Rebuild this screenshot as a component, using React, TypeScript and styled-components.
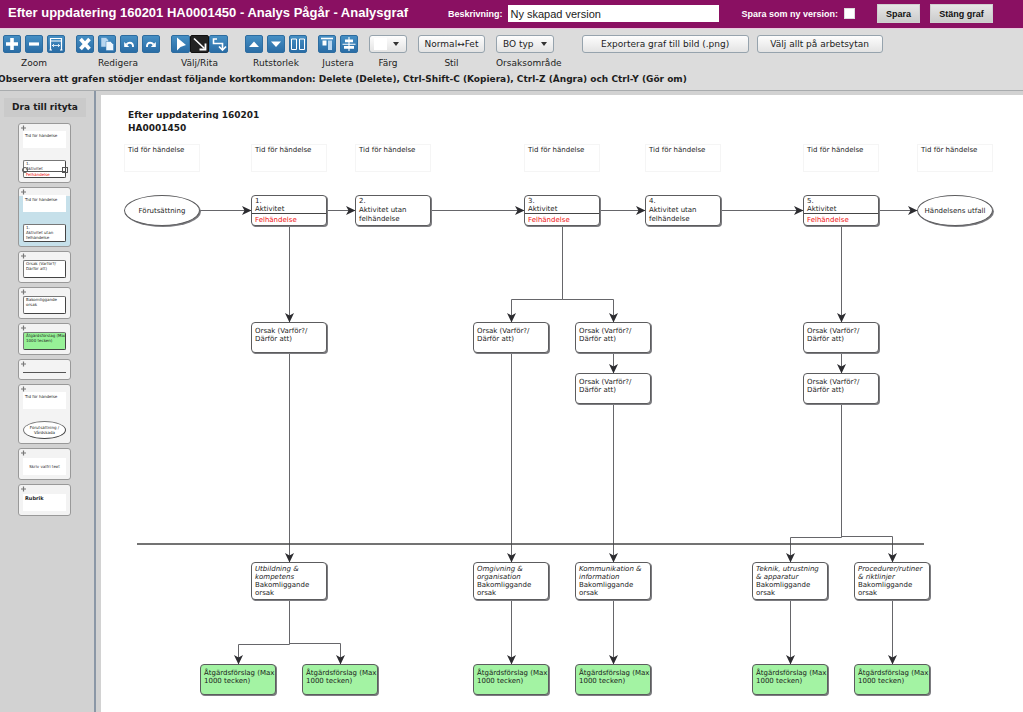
import React from "react";
import styled, { createGlobalStyle, css } from "styled-components";

const GlobalStyle = createGlobalStyle`
  * { box-sizing: border-box; }
  html, body { margin: 0; padding: 0; }
  body {
    font-family: "DejaVu Sans", Verdana, sans-serif;
    font-size: 9px;
    color: #1c1c1c;
    background: #d2d2d2;
  }
  button, input, select { font: inherit; color: inherit; margin: 0; }
`;

const Page = styled.div`
  min-height: 100vh;
  display: flex;
  flex-direction: column;
`;

/* ---------- header ---------- */

const Header = styled.header`
  height: 29px;
  padding: 0 30px 1px 8px;
  display: flex;
  align-items: center;
  background: #8a1062;
  border-bottom: 1px solid #e9c9de;
  color: #fff;
  font-family: "Liberation Sans", Arial, sans-serif;
  font-weight: bold;
  white-space: nowrap;
`;

const Title = styled.h1`
  margin: 0 auto 0 0;
  font-size: 13px;
  line-height: 24px;
  padding-bottom: 2px;
`;

const Field = styled.label`
  display: flex;
  align-items: center;
  gap: 6px;
  margin-right: 22px;
`;

const TextInput = styled.input`
  width: 211px;
  height: 17px;
  padding: 0 2px;
  border: 0;
  background: #fff;
  color: #222;
  font-size: 11px;
  font-weight: normal;
`;

const CheckInput = styled.input`
  appearance: none;
  width: 11px;
  height: 11px;
  background: #fff;
  border: 1px solid #ddd;
`;

const HeaderActions = styled.div`
  display: flex;
  gap: 10px;
`;

const HeaderButton = styled.button<{ $width: number }>`
  width: ${(p) => p.$width}px;
  height: 19px;
  padding: 0;
  border: 1px solid #cfcfcf;
  background: linear-gradient(#e6e6e6, #cbcbcb);
  color: #111;
  font-weight: bold;
`;

/* ---------- toolbar ---------- */

const Toolbar = styled.section`
  height: 62px;
  padding: 6px 3px 0;
  background: #dcdcdc;
  border-bottom: 1px solid #a9acae;
  white-space: nowrap;
`;

const ToolRow = styled.div`
  display: flex;
  align-items: flex-start;
  gap: 11px;
`;

const Group = styled.div<{ $after?: number; $start?: boolean }>`
  display: flex;
  flex-direction: column;
  align-items: ${(p) => (p.$start ? "flex-start" : "center")};
  gap: 4px;
  margin-right: ${(p) => p.$after ?? 0}px;
  line-height: 12px;
`;

const Buttons = styled.div<{ $gap?: number }>`
  display: flex;
  gap: ${(p) => p.$gap ?? 4}px;
`;

const IconButton = styled.button<{ $wide?: boolean; $active?: boolean }>`
  width: ${(p) => (p.$wide ? 19 : 18)}px;
  height: 18px;
  padding: 0;
  border: 1px solid ${(p) => (p.$active ? "#111" : "#2d6c9f")};
  border-radius: 2px;
  background: ${(p) => (p.$active ? "#222" : "linear-gradient(#468fc4, #2a6da6)")};
  display: flex;
  align-items: center;
  justify-content: center;
  color: #fff;
  svg { flex: none; display: block; }
`;

const plain = css`
  height: 18px;
  border: 1px solid #96a3ad;
  border-radius: 3px;
  background: linear-gradient(#fdfdfd, #e3e3e3);
  color: #1c1c1c;
`;

const PlainButton = styled.button<{ $width: number }>`
  ${plain}
  width: ${(p) => p.$width}px;
  padding: 0;
`;

const SwatchButton = styled.button`
  ${plain}
  width: 38px;
  padding: 0 7px 0 4px;
  display: flex;
  align-items: center;
  justify-content: space-between;
`;

const Swatch = styled.span`
  width: 13px;
  height: 12px;
  background: #fff;
`;

const SelectWrap = styled.div`
  display: grid;
  width: 58px;
  align-items: center;
  > * { grid-area: 1 / 1; }
  svg { justify-self: end; margin-right: 7px; pointer-events: none; }
`;

const Select = styled.select`
  ${plain}
  width: 100%;
  appearance: none;
  padding: 0 6px;
`;

const Notice = styled.p`
  margin: 4px 0 0 -5px;
  font-weight: bold;
  line-height: 12px;
`;

/* ---------- workspace ---------- */

const Workspace = styled.div`
  flex: 1;
  display: flex;
  background: #d2d2d2;
`;

const Sidebar = styled.aside`
  flex: none;
  width: 96px;
  padding: 7px 4px;
  border-right: 2px solid #8b97a6;
`;

const SideTitle = styled.h2`
  margin: 0 4px 6px 0;
  font-size: 9px;
  line-height: 19px;
  text-align: center;
  background: #cacaca;
`;

const Palette = styled.div`
  display: flex;
  flex-direction: column;
  gap: 4px;
  padding-left: 14px;
`;

const Item = styled.div<{ $height: number; $tint?: boolean }>`
  width: 53px;
  height: ${(p) => p.$height}px;
  padding: 1px 4px 4px;
  border: 1px solid #999;
  border-radius: 3px;
  background: ${(p) => (p.$tint ? "linear-gradient(#f3f3f3 8px, #c6e0ea 8px)" : "#f3f3f3")};
  display: flex;
  flex-direction: column;
  font-size: 4px;
  line-height: 5px;
  white-space: nowrap;
  > svg { flex: none; display: block; margin-left: -2px; }
`;

const MiniText = styled.div<{ $center?: boolean; $heading?: boolean }>`
  height: 17px;
  padding: ${(p) => (p.$center ? "6px 0" : "2px 2px")};
  background: #fff;
  ${(p) => p.$center && "text-align: center;"}
  ${(p) => p.$heading && "font-weight: bold; font-size: 5px;"}
`;

const MiniNode = styled.div<{ $green?: boolean; $oval?: boolean }>`
  height: 18px;
  padding: 0 2px;
  border: 1px solid #777;
  border-right-color: #444;
  border-bottom-color: #444;
  border-radius: ${(p) => (p.$oval ? "50%" : "2px")};
  background: ${(p) => (p.$green ? "#97f197" : "#fff")};
  overflow: hidden;
  ${(p) => p.$oval && "padding-top: 3px; text-align: center;"}
`;

const Handles = styled.div`
  position: relative;
  &::before, &::after {
    content: "";
    position: absolute;
    top: 7px;
    width: 4px;
    height: 4px;
    border: 1px solid #555;
  }
  &::before { left: -1px; border-radius: 50%; }
  &::after { right: -2px; }
`;

const MiniFault = styled.div`
  margin: 0 -2px;
  padding: 0 2px;
  border-top: 1px solid #555;
  color: #e00;
`;

const MiniRule = styled.hr`
  width: 100%;
  margin: 5px 0 0;
  border: 0;
  border-top: 1px solid #555;
`;

const Spacer = styled.div`
  flex: 1;
`;

const Canvas = styled.main`
  position: relative;
  flex: 1;
  min-width: 0;
  margin: 4px 0 0 5px;
  background: #fff;
  overflow: hidden;
  font-size: 7px;
  white-space: nowrap;
`;

const CanvasTitle = styled.h2`
  margin: 14px 0 0 27px;
  font-size: 9px;
  line-height: 13px;
  span {
    display: block;
    height: 10px;
    margin-bottom: 3px;
    overflow: hidden;
    line-height: 12px;
  }
`;

const Lines = styled.svg`
  position: absolute;
  left: 0;
  top: 0;
`;

interface Place { $x: number; $y: number }

const placed = css<Place>`
  position: absolute;
  left: ${(p) => p.$x}px;
  top: ${(p) => p.$y}px;
  width: 76px;
`;

const outline = css`
  border: 1px solid #5c5c5e;
  box-shadow: 1px 1px 0 #7c7c80;
`;

const TimeBox = styled.div<Place>`
  ${placed}
  height: 28px;
  padding: 1px 3px;
  border: 1px solid #f5f5f5;
  line-height: 9px;
`;

const nodePadding = { step: 1, fault: 1, cause: 4, root: 2, action: 4 };

const Node = styled.div<Place & { $kind: Kind }>`
  ${placed}
  ${outline}
  height: ${(p) => (p.$kind === "root" ? 38 : 31)}px;
  padding: ${(p) => nodePadding[p.$kind]}px 3px 0;
  border-radius: 4px;
  background: ${(p) => (p.$kind === "action" ? "#a3f3a3" : "#fff")};
  line-height: ${(p) => (p.$kind === "step" ? 9 : 8)}px;
`;

const Oval = styled.div<Place>`
  ${placed}
  ${outline}
  height: 31px;
  border-radius: 50%;
  background: #fff;
  display: flex;
  align-items: center;
  justify-content: center;
`;

const Fault = styled.div`
  margin: 0 -3px;
  padding: 2px 3px 0;
  border-top: 1px solid #444;
  color: #f01010;
`;

/* ---------- data ---------- */

type Kind = "step" | "fault" | "cause" | "root" | "action";

const times = [23, 150, 254, 423, 544, 702, 816];

const steps = [
  { x: 150, n: 1, fault: true },
  { x: 254, n: 2, fault: false },
  { x: 423, n: 3, fault: true },
  { x: 544, n: 4, fault: false },
  { x: 702, n: 5, fault: true },
];

const causes = [
  [150, 227], [372, 227], [474, 227], [702, 227], [474, 278], [702, 278],
];

const roots = [
  { x: 150, area: ["Utbildning &", "kompetens"] },
  { x: 372, area: ["Omgivning &", "organisation"] },
  { x: 474, area: ["Kommunikation &", "information"] },
  { x: 651, area: ["Teknik, utrustning", "& apparatur"] },
  { x: 753, area: ["Procedurer/rutiner", "& riktlinjer"] },
];

const actions = [99, 201, 372, 474, 651, 753];

const connectors = [
  "M99 115.5H150", "M226 115.5H254", "M330 115.5H423", "M499 115.5H544", "M620 115.5H702", "M778 115.5H816",
  "M188.5 131V227", "M188.5 258V467",
  "M461.5 131V204.5H410.5V227", "M461.5 131V204.5H512.5V227",
  "M410.5 258V467", "M512.5 258V278", "M512.5 309V467",
  "M740.5 131V227", "M740.5 258V278",
  "M740.5 309V442.5H689.5V467", "M740.5 309V441.5H791.5V467",
  "M188.5 505V549.5H137.5V569", "M188.5 505V548.5H239.5V569",
  "M410.5 505V569", "M512.5 505V569", "M689.5 505V569", "M791.5 505V569",
];

/* ---------- icons ---------- */

const Icon = ({ children }: { children: React.ReactNode }) => (
  <svg width="18" height="18" viewBox="0 0 18 18" fill="none" stroke="currentColor" aria-hidden="true">
    {children}
  </svg>
);

const icons = {
  plus: <path d="M9 3v12M3 9h12" strokeWidth="3.6" />,
  minus: <path d="M4 9h10" strokeWidth="3.2" />,
  fit: (
    <>
      <path d="M3.500 15V3.500h11V15M3.500 6h11M2.500 15h2.500M13 15h2.500" strokeWidth="1.200" />
      <path d="M5 10.500h8M7 9l-1.500 1.500L7 12M11 9l1.500 1.500L11 12" strokeWidth=".8" />
    </>
  ),
  close: <path d="M4.500 4l9 10M13.500 4l-9 10" strokeWidth="3.6" />,
  copy: (
    <g stroke="#3b7fb6" strokeWidth=".5">
      <path d="M3 2.500h5l2.500 2.500v7H3z" fill="#b9d6ef" />
      <path d="M8 6.500h4.500l3 3v6H8z" fill="#eef6fd" />
    </g>
  ),
  undo: (
    <>
      <path d="M13 12c.3-2.600-1-4.200-3.200-4.200-1.300 0-2.300.6-3.300 1.700" strokeWidth="1.900" />
      <path d="M4.200 7v5H9.200z" fill="currentColor" stroke="none" />
    </>
  ),
  redo: (
    <>
      <path d="M5 12c-.3-2.600 1-4.200 3.200-4.200 1.300 0 2.300.6 3.300 1.700" strokeWidth="1.900" />
      <path d="M13.800 7v5H8.800z" fill="currentColor" stroke="none" />
    </>
  ),
  pointer: <path d="M5 2.500v13l3.500-3.500 5.500-2z" fill="currentColor" stroke="none" />,
  line: (
    <>
      <path d="M3 3.500l10.500 10" strokeWidth="1.600" />
      <path d="M14.500 8.500v6H8.500" strokeWidth="1.800" />
    </>
  ),
  elbow: (
    <>
      <path d="M7 4H3.500v4.500h9V14" strokeWidth="1.600" />
      <path d="M9 11.500l3.500 3.500 3.500-3.500" strokeWidth="1.700" />
    </>
  ),
  up: <path d="M4 12l5-5.500L14 12z" fill="currentColor" stroke="none" />,
  down: <path d="M4 6.500h10L9 12z" fill="currentColor" stroke="none" />,
  columns: <path d="M2.500 4h5v10.500h-5zM10.500 4h5v10.500h-5z" strokeWidth="1" />,
  alignTop: (
    <>
      <path d="M3 3.500h12" strokeWidth="1.600" />
      <path d="M4.500 5.500h4v5h-4z" fill="currentColor" stroke="none" />
      <path d="M10 5.500h4v9.500h-4z" fill="#b9d6ef" stroke="none" />
    </>
  ),
  alignMiddle: (
    <>
      <path d="M5 4.500h8v2.800H5zM4 11h10v2.800H4z" fill="currentColor" stroke="none" />
      <path d="M2.500 9.200h13M9 2v14" strokeWidth="1.100" />
    </>
  ),
};

type IconName = keyof typeof icons;

const Tool = ({ name, label, wide, active }: { name: IconName; label: string; wide?: boolean; active?: boolean }) => (
  <IconButton type="button" aria-label={label} $wide={wide} $active={active}>
    <Icon>{icons[name]}</Icon>
  </IconButton>
);

const Caret = () => (
  <svg width="6" height="5" viewBox="0 0 6 5" aria-hidden="true">
    <path d="M0 0h6L3 4z" fill="#333" />
  </svg>
);

const Grip = () => (
  <svg width="5" height="6" viewBox="0 0 5 6" aria-hidden="true">
    <path d="M2.500 .5v5M0 3h5" stroke="#777" strokeWidth="1.200" />
  </svg>
);

export default function App() {
  return (
    <Page>
      <GlobalStyle />
      <Header>
        <Title>Efter uppdatering 160201 HA0001450 - Analys Pågår - Analysgraf</Title>
        <Field>
          Beskrivning:
          <TextInput type="text" defaultValue="Ny skapad version" />
        </Field>
        <Field>
          Spara som ny version:
          <CheckInput type="checkbox" />
        </Field>
        <HeaderActions>
          <HeaderButton type="button" $width={43}>Spara</HeaderButton>
          <HeaderButton type="button" $width={63}>Stäng graf</HeaderButton>
        </HeaderActions>
      </Header>

      <Toolbar>
        <ToolRow>
          <Group>
            <Buttons>
              <Tool name="plus" label="Zooma in" />
              <Tool name="minus" label="Zooma ut" />
              <Tool name="fit" label="Anpassa" />
            </Buttons>
            Zoom
          </Group>
          <Group>
            <Buttons>
              <Tool name="close" label="Ta bort" />
              <Tool name="copy" label="Kopiera" />
              <Tool name="undo" label="Ångra" />
              <Tool name="redo" label="Gör om" />
            </Buttons>
            Redigera
          </Group>
          <Group $after={6}>
            <Buttons $gap={0}>
              <Tool name="pointer" label="Välj" wide />
              <Tool name="line" label="Rita linje" wide active />
              <Tool name="elbow" label="Rita vinklad linje" wide />
            </Buttons>
            Välj/Rita
          </Group>
          <Group>
            <Buttons>
              <Tool name="up" label="Större" />
              <Tool name="down" label="Mindre" />
              <Tool name="columns" label="Samma storlek" />
            </Buttons>
            Rutstorlek
          </Group>
          <Group>
            <Buttons>
              <Tool name="alignTop" label="Justera överkant" />
              <Tool name="alignMiddle" label="Justera mitten" />
            </Buttons>
            Justera
          </Group>
          <Group>
            <SwatchButton type="button" aria-label="Välj färg">
              <Swatch />
              <Caret />
            </SwatchButton>
            Färg
          </Group>
          <Group>
            <PlainButton type="button" $width={67}>Normal↔Fet</PlainButton>
            Stil
          </Group>
          <Group $start $after={9}>
            <SelectWrap>
              <Select id="area" defaultValue="bo">
                <option value="bo">BO typ</option>
              </Select>
              <Caret />
            </SelectWrap>
            <label htmlFor="area">Orsaksområde</label>
          </Group>
          <Buttons $gap={8}>
            <PlainButton type="button" $width={167}>Exportera graf till bild (.png)</PlainButton>
            <PlainButton type="button" $width={126}>Välj allt på arbetsytan</PlainButton>
          </Buttons>
        </ToolRow>
        <Notice>
          Observera att grafen stödjer endast följande kortkommandon: Delete (Delete), Ctrl-Shift-C (Kopiera), Ctrl-Z (Ångra) och Ctrl-Y (Gör om)
        </Notice>
      </Toolbar>

      <Workspace>
        <Sidebar>
          <SideTitle>Dra till rityta</SideTitle>
          <Palette>
            <Item $height={60}>
              <Grip />
              <MiniText>Tid för händelse</MiniText>
              <Spacer />
              <Handles>
                <MiniNode>1.<br />Aktivitet<MiniFault>Felhändelse</MiniFault></MiniNode>
              </Handles>
            </Item>
            <Item $height={60} $tint>
              <Grip />
              <MiniText>Tid för händelse</MiniText>
              <Spacer />
              <MiniNode>1.<br />Aktivitet utan<br />felhändelse</MiniNode>
            </Item>
            <Item $height={32}>
              <Grip />
              <Spacer />
              <MiniNode>Orsak (Varför?/<br />Därför att)</MiniNode>
            </Item>
            <Item $height={32}>
              <Grip />
              <Spacer />
              <MiniNode>Bakomliggande<br />orsak</MiniNode>
            </Item>
            <Item $height={32}>
              <Grip />
              <Spacer />
              <MiniNode $green>Åtgärdsförslag (Max<br />1000 tecken)</MiniNode>
            </Item>
            <Item $height={21}>
              <Grip />
              <MiniRule />
            </Item>
            <Item $height={60}>
              <Grip />
              <MiniText>Tid för händelse</MiniText>
              <Spacer />
              <MiniNode $oval>Förutsättning /<br />Vårdskada</MiniNode>
            </Item>
            <Item $height={32}>
              <Grip />
              <Spacer />
              <MiniText $center>Skriv valfri text</MiniText>
            </Item>
            <Item $height={32}>
              <Grip />
              <Spacer />
              <MiniText $heading>Rubrik</MiniText>
            </Item>
          </Palette>
        </Sidebar>

        <Canvas>
          <CanvasTitle>
            <span>Efter uppdatering 160201</span>
            <span>HA0001450</span>
          </CanvasTitle>

          <Lines width="922" height="617" aria-hidden="true">
            <defs>
              <marker id="arrow" markerUnits="userSpaceOnUse" markerWidth="10" markerHeight="9" refX="9" refY="4.500" orient="auto">
                <path d="M0 0L9.500 4.500 0 9l2.500-4.500z" fill="#2c2c30" />
              </marker>
            </defs>
            {connectors.map((d) => (
              <path key={d} d={d} fill="none" stroke="#66666a" strokeWidth="1" markerEnd="url(#arrow)" />
            ))}
            <path d="M36 449H823" stroke="#444" strokeWidth="1.500" />
          </Lines>

          {times.map((x) => (
            <TimeBox key={x} $x={x} $y={49}>Tid för händelse</TimeBox>
          ))}
          <Oval $x={23} $y={100}>Förutsättning</Oval>
          <Oval $x={816} $y={100}>Händelsens utfall</Oval>
          {steps.map((s) => (
            <Node key={s.n} $x={s.x} $y={100} $kind={s.fault ? "fault" : "step"}>
              {s.n}.
              <br />
              {s.fault ? (
                <>
                  Aktivitet
                  <Fault>Felhändelse</Fault>
                </>
              ) : (
                <>
                  Aktivitet utan
                  <br />
                  felhändelse
                </>
              )}
            </Node>
          ))}
          {causes.map(([x, y]) => (
            <Node key={`${x}-${y}`} $x={x} $y={y} $kind="cause">
              Orsak (Varför?/
              <br />
              Därför att)
            </Node>
          ))}
          {roots.map((r) => (
            <Node key={r.x} $x={r.x} $y={467} $kind="root">
              <em>
                {r.area[0]}
                <br />
                {r.area[1]}
              </em>
              <br />
              Bakomliggande
              <br />
              orsak
            </Node>
          ))}
          {actions.map((x) => (
            <Node key={x} $x={x} $y={569} $kind="action">
              Åtgärdsförslag (Max
              <br />
              1000 tecken)
            </Node>
          ))}
        </Canvas>
      </Workspace>
    </Page>
  );
}
